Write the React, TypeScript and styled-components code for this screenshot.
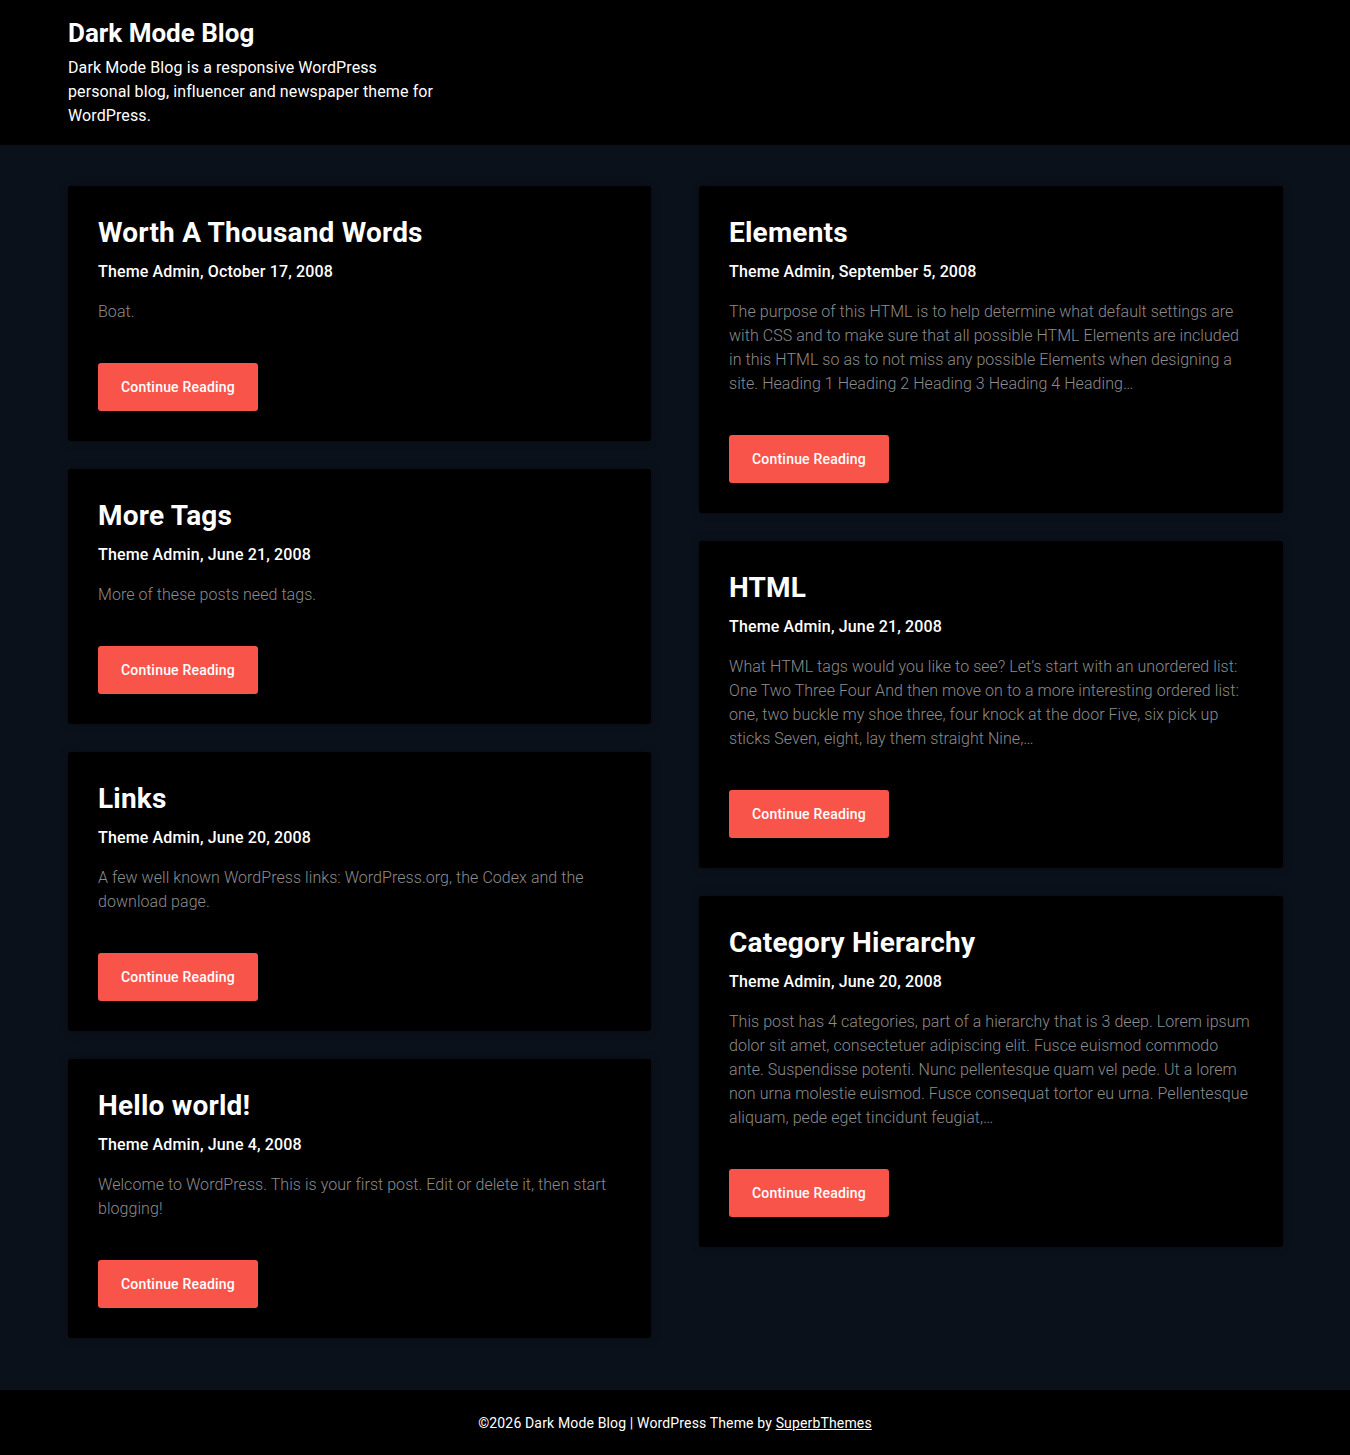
import React from "react"
import styled, { createGlobalStyle } from "styled-components"

type Post = {
  title: string
  meta: string
  excerpt: string
}

const leftPosts: Post[] = [
  {
    title: "Worth A Thousand Words",
    meta: "Theme Admin, October 17, 2008",
    excerpt: "Boat.",
  },
  {
    title: "More Tags",
    meta: "Theme Admin, June 21, 2008",
    excerpt: "More of these posts need tags.",
  },
  {
    title: "Links",
    meta: "Theme Admin, June 20, 2008",
    excerpt:
      "A few well known WordPress links: WordPress.org, the Codex and the download page.",
  },
  {
    title: "Hello world!",
    meta: "Theme Admin, June 4, 2008",
    excerpt:
      "Welcome to WordPress. This is your first post. Edit or delete it, then start blogging!",
  },
]

const rightPosts: Post[] = [
  {
    title: "Elements",
    meta: "Theme Admin, September 5, 2008",
    excerpt:
      "The purpose of this HTML is to help determine what default settings are with CSS and to make sure that all possible HTML Elements are included in this HTML so as to not miss any possible Elements when designing a site. Heading 1 Heading 2 Heading 3 Heading 4 Heading…",
  },
  {
    title: "HTML",
    meta: "Theme Admin, June 21, 2008",
    excerpt:
      "What HTML tags would you like to see? Let’s start with an unordered list: One Two Three Four And then move on to a more interesting ordered list: one, two buckle my shoe three, four knock at the door Five, six pick up sticks Seven, eight, lay them straight Nine,…",
  },
  {
    title: "Category Hierarchy",
    meta: "Theme Admin, June 20, 2008",
    excerpt:
      "This post has 4 categories, part of a hierarchy that is 3 deep. Lorem ipsum dolor sit amet, consectetuer adipiscing elit. Fusce euismod commodo ante. Suspendisse potenti. Nunc pellentesque quam vel pede. Ut a lorem non urna molestie euismod. Fusce consequat tortor eu urna. Pellentesque aliquam, pede eget tincidunt feugiat,…",
  },
]

const GlobalStyle = createGlobalStyle`
  body {
    margin: 0;
    background: #0b111b;
    font-family: Roboto, "Liberation Sans", sans-serif;
    color: #fff;
  }
`

const Header = styled.header`
  background: #000;
  padding: 16px 68px 20px;
  height: 145px;
  box-sizing: border-box;
`

const SiteTitle = styled.h1`
  margin: 0 0 6px;
  font-size: 26px;
  font-weight: 700;
  line-height: 34px;
`

const SiteDescription = styled.p`
  margin: 0;
  max-width: 366px;
  font-size: 16px;
  line-height: 24px;
  font-weight: 400;
  letter-spacing: 0.1px;
`

const Main = styled.main`
  display: grid;
  grid-template-columns: 583px 584px;
  column-gap: 48px;
  padding: 41px 68px 52px;
  align-items: start;
`

const Column = styled.div`
  display: flex;
  flex-direction: column;
  gap: 28px;
`

const Card = styled.article`
  background: #000;
  border-radius: 3px;
  padding: 29px 30px 30px;
  box-shadow: 0 0 8px rgba(0, 0, 0, 0.35);
`

const Title = styled.h2`
  margin: 0 0 9px;
  font-size: 28px;
  line-height: 36px;
  font-weight: 700;
  letter-spacing: 0.2px;
`

const Meta = styled.div`
  font-size: 16px;
  line-height: 24px;
  font-weight: 500;
  letter-spacing: 0.15px;
  margin-bottom: 16px;
`

const Excerpt = styled.p`
  margin: 0 0 39px;
  font-size: 16px;
  line-height: 24px;
  font-weight: 300;
  letter-spacing: 0.05px;
  color: #8c8c8c;
`

const Button = styled.a`
  display: inline-flex;
  align-items: center;
  justify-content: center;
  width: 160px;
  height: 48px;
  background: #f9544a;
  color: #fff;
  border-radius: 3px;
  font-size: 14px;
  font-weight: 500;
  text-decoration: none;
  letter-spacing: 0.2px;
`

const Footer = styled.footer`
  background: #000;
  height: 65px;
  display: flex;
  align-items: center;
  justify-content: center;
  font-size: 14px;
  letter-spacing: 0.15px;
  a {
    color: #fff;
    text-decoration: underline;
  }
`

const PostCard = ({ title, meta, excerpt }: Post) => (
  <Card>
    <Title>{title}</Title>
    <Meta>{meta}</Meta>
    <Excerpt>{excerpt}</Excerpt>
    <Button href="#">Continue Reading</Button>
  </Card>
)

const App = () => (
  <>
    <GlobalStyle />
    <Header>
      <SiteTitle>Dark Mode Blog</SiteTitle>
      <SiteDescription>
        Dark Mode Blog is a responsive WordPress personal blog, influencer and
        newspaper theme for WordPress.
      </SiteDescription>
    </Header>
    <Main>
      <Column>
        {leftPosts.map((p) => (
          <PostCard key={p.title} {...p} />
        ))}
      </Column>
      <Column>
        {rightPosts.map((p) => (
          <PostCard key={p.title} {...p} />
        ))}
      </Column>
    </Main>
    <Footer>
      <span>
        ©2026 Dark Mode Blog | WordPress Theme by <a href="#">SuperbThemes</a>
      </span>
    </Footer>
  </>
)

export default App
